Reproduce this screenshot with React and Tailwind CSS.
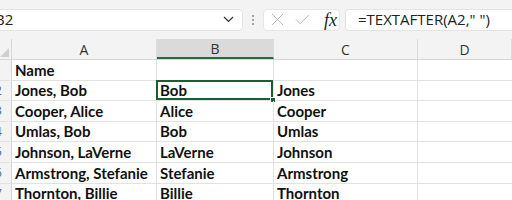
import React from 'react';

const ROWS = [
  { n: 1, a: 'Name', b: '', c: '' },
  { n: 2, a: 'Jones, Bob', b: 'Bob', c: 'Jones', sel: true },
  { n: 3, a: 'Cooper, Alice', b: 'Alice', c: 'Cooper' },
  { n: 4, a: 'Umlas, Bob', b: 'Bob', c: 'Umlas' },
  { n: 5, a: 'Johnson, LaVerne', b: 'LaVerne', c: 'Johnson' },
  { n: 6, a: 'Armstrong, Stefanie', b: 'Stefanie', c: 'Armstrong' },
  { n: 7, a: 'Thornton, Billie', b: 'Billie', c: 'Thornton' },
];

const UI = { fontFamily: '"Open Sans", "Noto Sans", sans-serif' };
const CELL = { fontFamily: 'Lato, "Open Sans", sans-serif' };

function FormulaBar() {
  return (
    <div className="flex h-[39px] items-center bg-[#f3f3f3]" style={UI}>
      {/* name box */}
      <div className="ml-[-20px] flex h-[22px] w-[263px] items-center rounded-[4px] border border-[#e3e3e3] bg-white pl-[14px] pr-[6px]">
        <span className="text-[15px] leading-none text-[#222]">B2</span>
        <svg className="ml-auto mr-[2px]" width="11" height="7" viewBox="0 0 11 7">
          <path d="M1 1 L5.5 5.5 L10 1" fill="none" stroke="#333" strokeWidth="1.2" />
        </svg>
      </div>
      {/* divider dots */}
      <div className="mx-[9px] flex flex-col gap-[2px]">
        <span className="h-[2px] w-[2px] rounded-full bg-[#888]" />
        <span className="h-[2px] w-[2px] rounded-full bg-[#888]" />
        <span className="h-[2px] w-[2px] rounded-full bg-[#888]" />
      </div>
      {/* cancel / enter / fx */}
      <div className="flex h-[22px] w-[77px] items-center rounded-[4px] border border-[#e6e6e6] bg-white pl-[7px]">
        <svg width="13" height="13" viewBox="0 0 14 14">
          <path d="M1 1 L13 13 M13 1 L1 13" stroke="#b4b4b4" strokeWidth="1" />
        </svg>
        <svg className="ml-[11px]" width="15" height="11" viewBox="0 0 16 12">
          <path d="M1 6 L5.5 10.5 L15 1" fill="none" stroke="#b4b4b4" strokeWidth="1" />
        </svg>
        <span
          className="ml-[14px] text-[18px] italic leading-none text-[#222]"
          style={{ fontFamily: '"Liberation Serif", serif' }}
        >
          fx
        </span>
      </div>
      {/* formula */}
      <div className="ml-[5px] flex h-[22px] flex-1 items-center rounded-l-[4px] border border-r-0 border-[#e3e3e3] bg-white pl-[12px]">
        <span className="text-[15px] leading-none text-[#222]">=TEXTAFTER(A2," ")</span>
      </div>
    </div>
  );
}

function Headers() {
  const cols = [
    { l: 'A', w: 'w-[145px]' },
    { l: 'B', w: 'w-[117px]', sel: true },
    { l: 'C', w: 'w-[144px]' },
    { l: 'D', w: 'flex-1' },
  ];
  return (
    <div className="flex h-[21px] border-b border-[#d6d6d6] bg-[#f3f3f3]" style={UI}>
      <div className="relative w-[12px] shrink-0 border-r border-[#d6d6d6]">
        <svg className="absolute bottom-[2px] right-[2px]" width="9" height="9" viewBox="0 0 9 9">
          <path d="M9 0 L9 9 L0 9 Z" fill="#cfcfcf" />
        </svg>
      </div>
      {cols.map((c) => (
        <div
          key={c.l}
          className={`flex shrink-0 items-center justify-center border-r border-[#dcdcdc] text-[14px] text-[#333] ${c.w} ${
            c.sel ? 'border-b-2 border-b-[#1e6e3f] bg-[#dadada] text-[#1e6e3f]' : ''
          }`}
        >
          {c.l}
        </div>
      ))}
    </div>
  );
}

function Row({ r }) {
  return (
    <div className="flex h-[20.6px] border-b border-[#e2e2e2]" style={CELL}>
      <div
        className="flex w-[12px] shrink-0 items-center justify-end overflow-hidden border-r border-[#d6d6d6] bg-[#f3f3f3] pr-[9px] text-[13px] text-[#5b6b8a]"
        style={UI}
      >
        {r.n}
      </div>
      <div className="flex w-[145px] shrink-0 items-center border-r border-[#e2e2e2] pl-[3px] text-[15px] font-bold text-[#111]">
        {r.a}
      </div>
      <div className="relative flex w-[117px] shrink-0 items-center border-r border-[#e2e2e2] pl-[3px] text-[15px] font-bold text-[#111]">
        {r.b}
        {r.sel && (
          <>
            <span className="pointer-events-none absolute left-[-1px] top-[-1px] h-[calc(100%+1px)] w-[calc(100%+1px)] border-2 border-[#1b5e34]" />
            <span className="absolute bottom-[-3px] right-[-3px] h-[6px] w-[6px] border border-white bg-[#1b5e34]" />
          </>
        )}
      </div>
      <div className="flex w-[144px] shrink-0 items-center border-r border-[#e2e2e2] pl-[3px] text-[15px] font-bold text-[#111]">
        {r.c}
      </div>
      <div className="flex-1" />
    </div>
  );
}

export default function App() {
  return (
    <div className="h-[200px] w-[512px] overflow-hidden bg-white">
      <FormulaBar />
      <Headers />
      {ROWS.map((r) => (
        <Row key={r.n} r={r} />
      ))}
    </div>
  );
}
